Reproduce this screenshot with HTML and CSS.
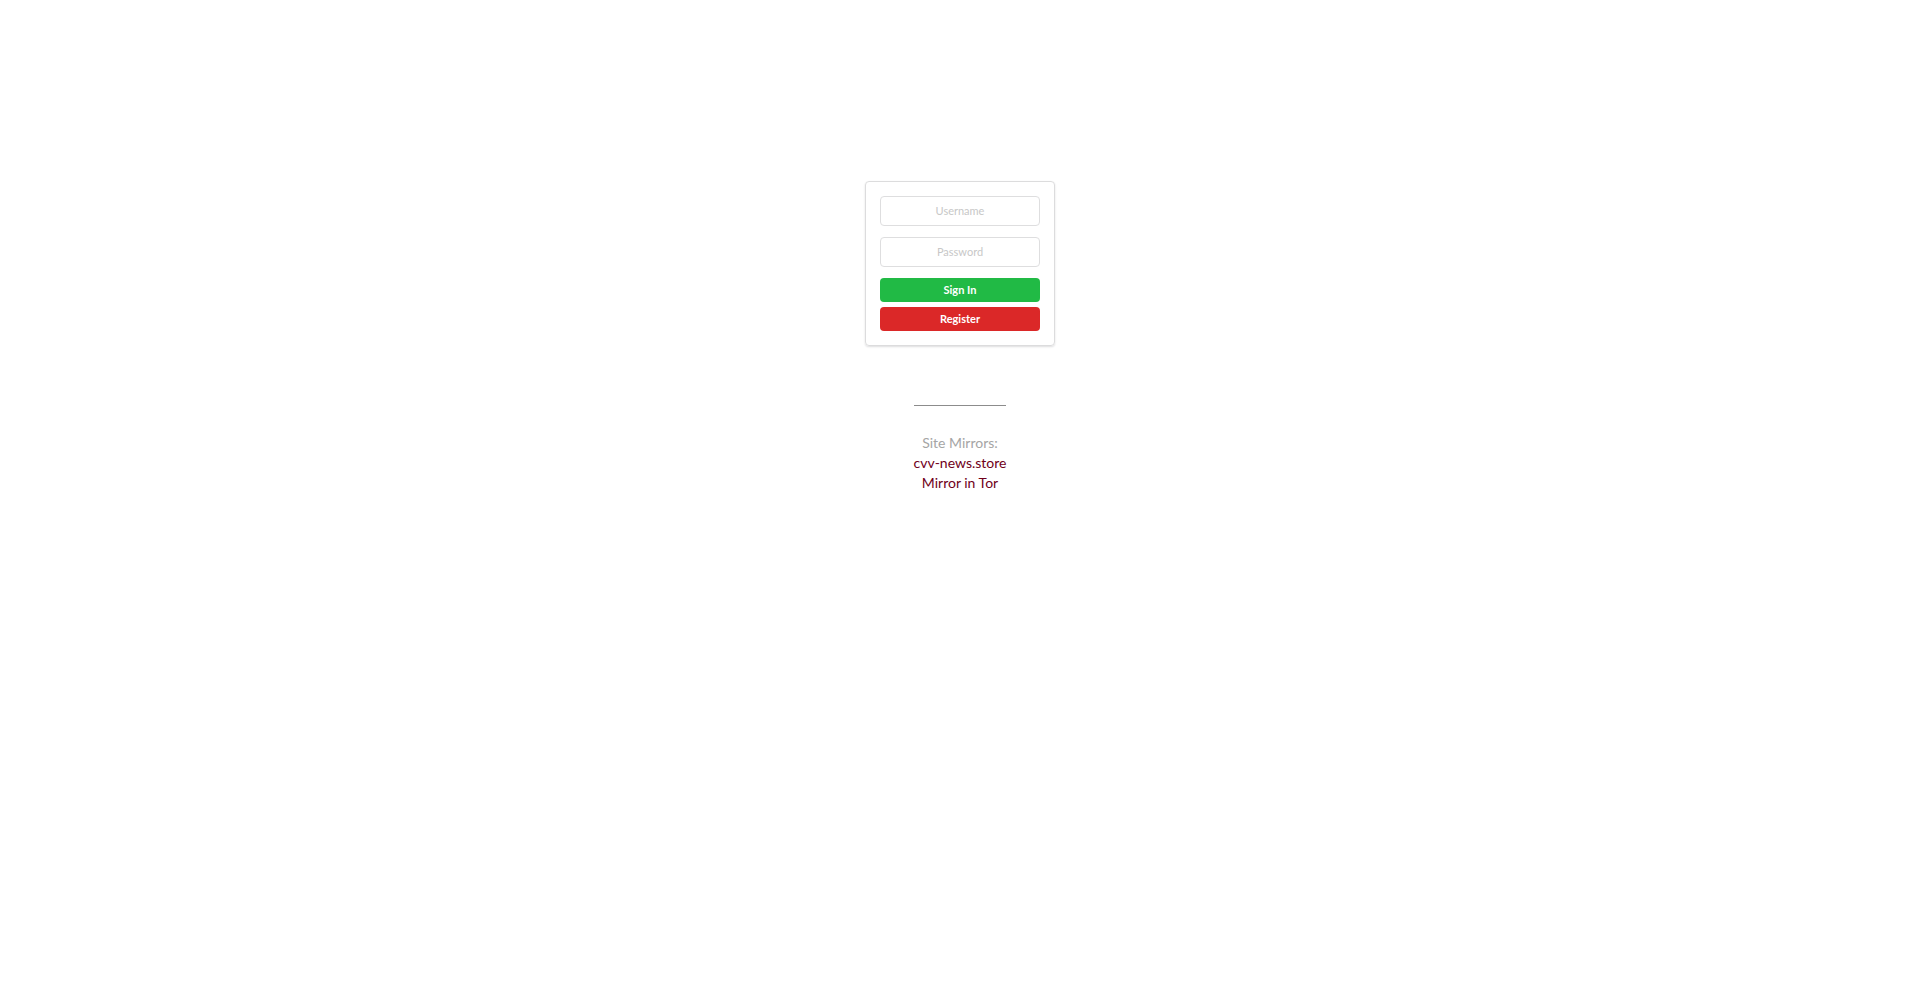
FILE: index.html
```html
<!DOCTYPE html>
<html lang="en">
<head>
    <meta charset="UTF-8">
    <meta name="viewport" content="width=device-width, initial-scale=1.0">
    <title>Sign In</title>
    <link rel="stylesheet" href="styles.css">
</head>
<body>

    <!-- Login Box -->
    <form class="login-box">
        <input type="text" name="username" placeholder="Username" aria-label="Username">
        <input type="password" name="password" placeholder="Password" aria-label="Password">
        <button type="submit" class="sign-in">Sign In</button>
        <button type="button" class="register">Register</button>
    </form>

    <!-- Mirrors -->
    <div class="mirrors">
        <hr>
        <p>Site Mirrors:</p>
        <a href="#">cvv-news.store</a>
        <a href="#">Mirror in Tor</a>
    </div>

</body>
</html>
```
FILE: styles.css
```css
/* Global Styles */
* {
    box-sizing: border-box;
}

body {
    font-family: Lato, Arial, sans-serif;
    font-size: 14px;
    line-height: 20px;
    margin: 0;
    padding-top: 181px;
    display: flex;
    flex-direction: column;
    align-items: center;
    background: #fff;
}

/* Login Box */
.login-box {
    display: flex;
    flex-direction: column;
    width: 190px;
    padding: 14px;
    border: 1px solid #dcdcdd;
    border-radius: 4px;
    box-shadow: 0 1px 2px 0 rgba(34, 36, 38, 0.15);
}

.login-box input {
    width: 100%;
    height: 30px;
    margin: 0 0 11px;
    padding: 0 11px 2px;
    border: 1px solid #dededf;
    border-radius: 4px;
    font-family: inherit;
    font-size: 11px;
    text-align: center;
    outline: none;
}

.login-box input::placeholder {
    color: #c7c7c7;
}

.login-box button {
    height: 24px;
    padding: 0 0 2px;
    border: none;
    border-radius: 4px;
    color: #fff;
    font-family: inherit;
    font-size: 11px;
    font-weight: bold;
    cursor: pointer;
}

.login-box .sign-in {
    margin-bottom: 5px;
    background: #21ba45;
}

.login-box .register {
    background: #db2828;
}

/* Mirrors */
.mirrors {
    display: flex;
    flex-direction: column;
    align-items: center;
    margin-top: 59px;
}

.mirrors hr {
    width: 100%;
    margin: 0 0 27px;
    border: 0;
    border-top: 1px solid #8c8c8c;
}

.mirrors p {
    margin: 0;
    color: #a5a5a5;
}

.mirrors a {
    color: #70001a;
    text-decoration: none;
}

.mirrors a:hover {
    text-decoration: underline;
}
```
